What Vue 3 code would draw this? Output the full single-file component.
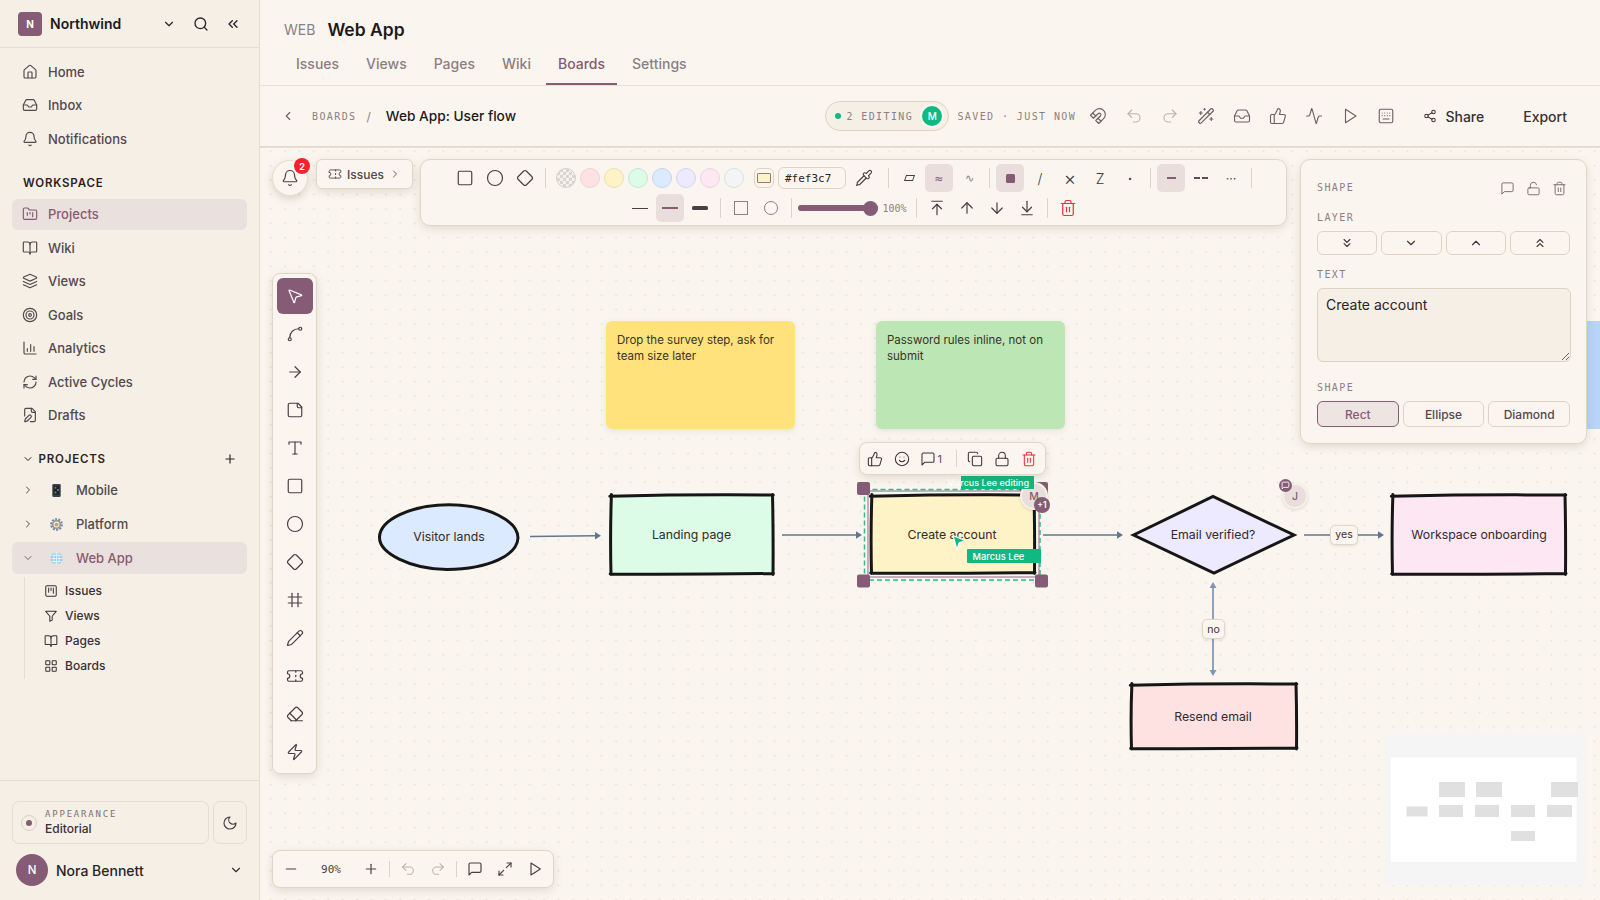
<script setup>
import { h } from 'vue'

const icons = {
  home: '<path d="M15 21v-8a1 1 0 0 0-1-1h-4a1 1 0 0 0-1 1v8"/><path d="M3 10a2 2 0 0 1 .709-1.528l7-5.999a2 2 0 0 1 2.582 0l7 5.999A2 2 0 0 1 21 10v9a2 2 0 0 1-2 2H5a2 2 0 0 1-2-2z"/>',
  inbox: '<polyline points="22 12 16 12 14 15 10 15 8 12 2 12"/><path d="M5.45 5.11 2 12v6a2 2 0 0 0 2 2h16a2 2 0 0 0 2-2v-6l-3.45-6.89A2 2 0 0 0 16.76 4H7.24a2 2 0 0 0-1.79 1.11z"/>',
  bell: '<path d="M10.268 21a2 2 0 0 0 3.464 0"/><path d="M3.262 15.326A1 1 0 0 0 4 17h16a1 1 0 0 0 .74-1.673C19.41 13.956 18 12.499 18 8A6 6 0 0 0 6 8c0 4.499-1.411 5.956-2.738 7.326"/>',
  folder: '<path d="M4 20h16a2 2 0 0 0 2-2V8a2 2 0 0 0-2-2h-7.93a2 2 0 0 1-1.66-.9l-.82-1.2A2 2 0 0 0 7.93 3H4a2 2 0 0 0-2 2v13c0 1.1.9 2 2 2Z"/><path d="M8 10v4"/><path d="M12 10v2"/><path d="M16 10v6"/>',
  book: '<path d="M12 7v14"/><path d="M3 18a1 1 0 0 1-1-1V4a1 1 0 0 1 1-1h5a4 4 0 0 1 4 4 4 4 0 0 1 4-4h5a1 1 0 0 1 1 1v13a1 1 0 0 1-1 1h-6a3 3 0 0 0-3 3 3 3 0 0 0-3-3z"/>',
  layers: '<path d="m12.83 2.18a2 2 0 0 0-1.66 0L2.6 6.08a1 1 0 0 0 0 1.83l8.58 3.91a2 2 0 0 0 1.66 0l8.58-3.9a1 1 0 0 0 0-1.83Z"/><path d="m22 17.65-9.17 4.16a2 2 0 0 1-1.66 0L2 17.65"/><path d="m22 12.65-9.17 4.16a2 2 0 0 1-1.66 0L2 12.65"/>',
  goal: '<circle cx="12" cy="12" r="10"/><circle cx="12" cy="12" r="6"/><circle cx="12" cy="12" r="2"/>',
  chart: '<path d="M3 3v16a2 2 0 0 0 2 2h16"/><path d="M8 17v-4"/><path d="M13 17V7"/><path d="M18 17v-7"/>',
  cycle: '<path d="M3 12a9 9 0 0 1 9-9 9.75 9.75 0 0 1 6.74 2.74L21 8"/><path d="M21 3v5h-5"/><path d="M21 12a9 9 0 0 1-9 9 9.75 9.75 0 0 1-6.74-2.74L3 16"/><path d="M8 16H3v5"/>',
  draft: '<path d="M12.5 22H18a2 2 0 0 0 2-2V7l-5-5H6a2 2 0 0 0-2 2v9.5"/><path d="M14 2v4a2 2 0 0 0 2 2h4"/><path d="M13.378 15.626a1 1 0 1 0-3.004-3.004l-5.01 5.012a2 2 0 0 0-.506.854l-.837 2.87a.5.5 0 0 0 .62.62l2.87-.837a2 2 0 0 0 .854-.506z"/>',
  kanban: '<rect x="3" y="3" width="18" height="18" rx="2"/><path d="M8 7v7"/><path d="M12 7v4"/><path d="M16 7v9"/>',
  funnel: '<path d="M3 4h18l-7 8.5V19l-4 2v-8.5z"/>',
  grid: '<rect x="3" y="3" width="7" height="7" rx="1"/><rect x="14" y="3" width="7" height="7" rx="1"/><rect x="14" y="14" width="7" height="7" rx="1"/><rect x="3" y="14" width="7" height="7" rx="1"/>',
  moon: '<path d="M12 3a6 6 0 0 0 9 9 9 9 0 1 1-9-9Z"/>',
  search: '<circle cx="11" cy="11" r="8"/><path d="m21 21-4.3-4.3"/>',
  dleft: '<path d="m11 17-5-5 5-5"/><path d="m18 17-5-5 5-5"/>',
  down: '<path d="m6 9 6 6 6-6"/>',
  up: '<path d="m18 15-6-6-6 6"/>',
  left: '<path d="m15 18-6-6 6-6"/>',
  right: '<path d="m9 18 6-6-6-6"/>',
  ddown: '<path d="m7 6 5 5 5-5"/><path d="m7 13 5 5 5-5"/>',
  dup: '<path d="m17 11-5-5-5 5"/><path d="m17 18-5-5-5 5"/>',
  plus: '<path d="M5 12h14"/><path d="M12 5v14"/>',
  minus: '<path d="M5 12h14"/>',
  magnet: '<path d="m6 15-4-4 6.75-6.77a7.79 7.79 0 0 1 11 11L13 22l-4-4 6.39-6.36a2.14 2.14 0 0 0-3-3L6 15"/><path d="m5 8 4 4"/><path d="m12 15 4 4"/>',
  undo: '<path d="M9 14 4 9l5-5"/><path d="M4 9h10.5a5.5 5.5 0 0 1 0 11H11"/>',
  redo: '<path d="m15 14 5-5-5-5"/><path d="M20 9H9.5a5.5 5.5 0 0 0 0 11H13"/>',
  wand: '<path d="m21.64 3.64-1.28-1.28a1.21 1.21 0 0 0-1.72 0L2.36 18.64a1.21 1.21 0 0 0 0 1.72l1.28 1.28a1.2 1.2 0 0 0 1.72 0L21.64 5.36a1.2 1.2 0 0 0 0-1.72"/><path d="m14 7 3 3"/><path d="M5 6v4"/><path d="M19 14v4"/><path d="M10 2v2"/><path d="M7 8H3"/><path d="M21 16h-4"/><path d="M11 3H9"/>',
  thumb: '<path d="M7 10v12"/><path d="M15 5.88 14 10h5.83a2 2 0 0 1 1.92 2.56l-2.33 8A2 2 0 0 1 17.5 22H4a2 2 0 0 1-2-2v-8a2 2 0 0 1 2-2h2.76a2 2 0 0 0 1.79-1.11L12 2a3.13 3.13 0 0 1 3 3.88Z"/>',
  activity: '<path d="M22 12h-2.48a2 2 0 0 0-1.93 1.46l-2.35 8.36a.25.25 0 0 1-.48 0L9.24 2.18a.25.25 0 0 0-.48 0l-2.35 8.36A2 2 0 0 1 4.49 12H2"/>',
  play: '<polygon points="6 3 20 12 6 21 6 3"/>',
  keys: '<rect x="3" y="3" width="18" height="18" rx="2"/><path d="M7 8h.01M10.3 8h.01M13.7 8h.01M17 8h.01M7 11.5h.01M10.3 11.5h.01M13.7 11.5h.01M17 11.5h.01"/><path d="M8 16h8"/>',
  share: '<circle cx="18" cy="5" r="3"/><circle cx="6" cy="12" r="3"/><circle cx="18" cy="19" r="3"/><line x1="8.59" x2="15.42" y1="13.51" y2="17.49"/><line x1="15.41" x2="8.59" y1="6.51" y2="10.49"/>',
  ticket: '<path d="M2 9a3 3 0 0 1 0 6v2a2 2 0 0 0 2 2h16a2 2 0 0 0 2-2v-2a3 3 0 0 1 0-6V7a2 2 0 0 0-2-2H4a2 2 0 0 0-2 2Z"/><path d="M13 5v2"/><path d="M13 17v2"/><path d="M13 11v2"/>',
  pipette: '<path d="m2 22 1-1h3l9-9"/><path d="M3 21v-3l9-9"/><path d="m15 6 3.4-3.4a2.1 2.1 0 1 1 3 3L18 9l.4.4a2.1 2.1 0 1 1-3 3l-3.8-3.8a2.1 2.1 0 1 1 3-3l.4.4Z"/>',
  sticky: '<path d="M16 3H5a2 2 0 0 0-2 2v14a2 2 0 0 0 2 2h14a2 2 0 0 0 2-2V8Z"/><path d="M15 3v4a2 2 0 0 0 2 2h4"/>',
  type: '<path d="M4 7V4h16v3"/><path d="M12 4v16"/><path d="M9 20h6"/>',
  frame: '<path d="M8 3v18"/><path d="M16 3v18"/><path d="M3 8h18"/><path d="M3 16h18"/>',
  pencil: '<path d="M21.174 6.812a1 1 0 0 0-3.986-3.987L3.842 16.174a2 2 0 0 0-.5.83l-1.321 4.352a.5.5 0 0 0 .623.622l4.353-1.32a2 2 0 0 0 .83-.497z"/><path d="m15 5 4 4"/>',
  eraser: '<path d="m7 21-4.3-4.3c-1-1-1-2.5 0-3.4l9.6-9.6c1-1 2.5-1 3.4 0l5.6 5.6c1 1 1 2.5 0 3.4L13 21"/><path d="M22 21H7"/><path d="m5 11 9 9"/>',
  bolt: '<path d="M4 14a1 1 0 0 1-.78-1.63l9.9-10.2a.5.5 0 0 1 .86.46l-1.92 6.02A1 1 0 0 0 13 10h7a1 1 0 0 1 .78 1.63l-9.9 10.2a.5.5 0 0 1-.86-.46l1.92-6.02A1 1 0 0 0 11 14z"/>',
  cursor: '<path d="M4.037 4.688a.495.495 0 0 1 .651-.651l16 6.5a.5.5 0 0 1-.063.947l-6.124 1.58a2 2 0 0 0-1.438 1.435l-1.579 6.126a.5.5 0 0 1-.947.063z"/>',
  curve: '<circle cx="5" cy="19" r="2"/><circle cx="19" cy="5" r="2"/><path d="M5 17C5 10 10 5 17 5"/>',
  arrow: '<path d="M5 12h14"/><path d="m12 5 7 7-7 7"/>',
  rect: '<rect x="3" y="3" width="18" height="18" rx="2"/>',
  circle: '<circle cx="12" cy="12" r="10"/>',
  diamond: '<path d="M2.7 10.3a2.41 2.41 0 0 0 0 3.41l7.59 7.59a2.41 2.41 0 0 0 3.41 0l7.59-7.59a2.41 2.41 0 0 0 0-3.41L13.7 2.71a2.41 2.41 0 0 0-3.41 0z"/>',
  msg: '<path d="M21 15a2 2 0 0 1-2 2H7l-4 4V5a2 2 0 0 1 2-2h14a2 2 0 0 1 2 2z"/>',
  lockopen: '<rect width="18" height="11" x="3" y="11" rx="2"/><path d="M7 11V7a5 5 0 0 1 9.9-1"/>',
  lock: '<rect width="18" height="11" x="3" y="11" rx="2"/><path d="M7 11V7a5 5 0 0 1 10 0v4"/>',
  trash: '<path d="M3 6h18"/><path d="M19 6v14c0 1-1 2-2 2H7c-1 0-2-1-2-2V6"/><path d="M8 6V4c0-1 1-2 2-2h4c1 0 2 1 2 2v2"/><line x1="10" x2="10" y1="11" y2="17"/><line x1="14" x2="14" y1="11" y2="17"/>',
  copy: '<rect width="14" height="14" x="8" y="8" rx="2"/><path d="M4 16c-1.1 0-2-.9-2-2V4c0-1.1.9-2 2-2h10c1.1 0 2 .9 2 2"/>',
  smile: '<circle cx="12" cy="12" r="10"/><path d="M8 14s1.5 2 4 2 4-2 4-2"/><line x1="9" x2="9.01" y1="9" y2="9"/><line x1="15" x2="15.01" y1="9" y2="9"/>',
  expand: '<path d="M15 3h6v6"/><path d="M9 21H3v-6"/><path d="M21 3l-7 7"/><path d="M3 21l7-7"/>',
  top: '<path d="M5 3h14"/><path d="m18 13-6-6-6 6"/><path d="M12 7v14"/>',
  aup: '<path d="m5 12 7-7 7 7"/><path d="M12 19V5"/>',
  adown: '<path d="M12 5v14"/><path d="m19 12-7 7-7-7"/>',
  bottom: '<path d="M12 17V3"/><path d="m6 11 6 6 6-6"/><path d="M19 21H5"/>'
}

const Ic = (props) => h('svg', {
  viewBox: '0 0 24 24',
  width: props.s || 16,
  height: props.s || 16,
  fill: 'none',
  stroke: 'currentColor',
  'stroke-width': props.w || 2,
  'stroke-linecap': 'round',
  'stroke-linejoin': 'round',
  innerHTML: icons[props.n]
})
Ic.props = ['n', 's', 'w']

const nav1 = [
  { i: 'home', t: 'Home' },
  { i: 'inbox', t: 'Inbox' },
  { i: 'bell', t: 'Notifications' }
]
const nav2 = [
  { i: 'folder', t: 'Projects', on: true },
  { i: 'book', t: 'Wiki' },
  { i: 'layers', t: 'Views' },
  { i: 'goal', t: 'Goals' },
  { i: 'chart', t: 'Analytics' },
  { i: 'cycle', t: 'Active Cycles' },
  { i: 'draft', t: 'Drafts' }
]
const subs = [
  { i: 'kanban', t: 'Issues' },
  { i: 'funnel', t: 'Views' },
  { i: 'book', t: 'Pages' },
  { i: 'grid', t: 'Boards' }
]
const tabs = ['Issues', 'Views', 'Pages', 'Wiki', 'Boards', 'Settings']
const headIcons = [
  { i: 'magnet' }, { i: 'undo', dim: true }, { i: 'redo', dim: true }, { i: 'wand' },
  { i: 'inbox' }, { i: 'thumb' }, { i: 'activity' }, { i: 'play' }, { i: 'keys' }
]
const swatches = [
  { c: '#fee2e2', b: '#f1cfcf' }, { c: '#fef3c7', b: '#eadfae' }, { c: '#dcfce7', b: '#c5e6d0' },
  { c: '#dbeafe', b: '#c3d5ec' }, { c: '#ede9fe', b: '#d8d3ee' }, { c: '#fce7f3', b: '#ecd3e2' }, { c: '#f3f4f6', b: '#dcdfe3' }
]
const tools = ['cursor', 'curve', 'arrow', 'sticky', 'type', 'rect', 'circle', 'diamond', 'frame', 'pencil', 'ticket', 'eraser', 'bolt']
const layerBtns = ['ddown', 'down', 'up', 'dup']
const shapeBtns = [{ t: 'Rect', on: true }, { t: 'Ellipse' }, { t: 'Diamond' }]
const mini = [
  [1439, 782, 26, 15], [1476, 782, 26, 15], [1551, 782, 27, 15], [1406.5, 806.5, 21, 10],
  [1439, 805, 24, 12], [1475, 805, 24, 12], [1511, 805, 24, 12], [1547, 805, 25, 12], [1511, 831, 24, 10]
]
function sk(a, b, c, d) {
  const mx = (a + c) / 2, my = (b + d) / 2
  return `M${a - 1.2} ${b + 0.8}Q${mx} ${b - 1.2} ${c + 0.8} ${b - 0.4}M${c} ${b - 1}Q${c + 0.9} ${my} ${c + 0.5} ${d + 1}M${c + 1} ${d}Q${mx} ${d + 1} ${a - 0.8} ${d + 0.6}M${a} ${d + 1}Q${a - 1} ${my} ${a + 0.4} ${b - 1}`
}
const rects = [
  { f: '#dcfce7', b: [611, 495.5, 772.5, 573.5], t: 'Landing page', x: 691.5, y: 534.5 },
  { f: '#fef3c7', b: [871.5, 495.5, 1034, 572.5], t: 'Create account', x: 952, y: 534.5 },
  { f: '#fce7f3', b: [1392.5, 495.5, 1565, 573.5], t: 'Workspace onboarding', x: 1479, y: 534.5 },
  { f: '#fee2e2', b: [1131.5, 684.5, 1296, 748], t: 'Resend email', x: 1213, y: 716.5 }
]
</script>

<template>
  <div class="app">
    <aside class="side">
      <div class="brand">
        <div class="logo">N</div>
        <div class="bname">Northwind</div>
        <button class="bbtn"><Ic n="down" :s="14" /></button>
        <button class="bbtn"><Ic n="search" :s="16" /></button>
        <button class="bbtn"><Ic n="dleft" :s="16" /></button>
      </div>
      <nav class="nav first">
        <a v-for="n in nav1" :key="n.t" class="item"><Ic :n="n.i" :s="16" :w="1.75" />{{ n.t }}</a>
      </nav>
      <div class="sect">WORKSPACE</div>
      <nav class="nav">
        <a v-for="n in nav2" :key="n.t" class="item" :class="{ on: n.on }"><Ic :n="n.i" :s="16" :w="1.75" />{{ n.t }}</a>
      </nav>
      <div class="phead">
        <span class="pchev"><Ic n="down" :s="12" /></span>
        <span class="ptitle">PROJECTS</span>
        <span class="pplus"><Ic n="plus" :s="14" /></span>
      </div>
      <div class="plist">
        <a class="prow">
          <span class="pchev2"><Ic n="right" :s="12" /></span>
          <svg class="emo" viewBox="0 0 16 16" width="15" height="15">
            <rect x="3.5" y="1" width="9" height="14" rx="1.5" fill="#3c4148" />
            <rect x="5" y="3" width="6" height="9.5" fill="#1d2328" />
            <circle cx="7" cy="5" r="1" fill="#d9524e" /><circle cx="9.5" cy="7.5" r="1" fill="#4aa3df" /><circle cx="7" cy="10" r="1" fill="#5cb85c" />
          </svg>
          Mobile
        </a>
        <a class="prow">
          <span class="pchev2"><Ic n="right" :s="12" /></span>
          <svg class="emo" viewBox="0 0 16 16" width="15" height="15">
            <circle cx="8" cy="8" r="5.5" fill="none" stroke="#7b8794" stroke-width="2.6" stroke-dasharray="2 1.4" />
            <circle cx="8" cy="8" r="4" fill="none" stroke="#8c98a4" stroke-width="1.8" />
            <circle cx="8" cy="8" r="2" fill="#c9a066" />
          </svg>
          Platform
        </a>
        <a class="prow on">
          <span class="pchev2"><Ic n="down" :s="12" /></span>
          <svg class="emo" viewBox="0 0 16 16" width="15" height="15">
            <circle cx="8" cy="8" r="6.5" fill="#8fd0ee" />
            <g fill="none" stroke="#e9f6fc" stroke-width=".9">
              <ellipse cx="8" cy="8" rx="3" ry="6.5" /><path d="M8 1.5v13M1.5 8h13M2.6 4.8h10.8M2.6 11.2h10.8" />
            </g>
          </svg>
          Web App
        </a>
      </div>
      <div class="subs">
        <a v-for="s in subs" :key="s.t" class="sub"><Ic :n="s.i" :s="14" :w="1.75" />{{ s.t }}</a>
      </div>
      <div class="foot">
        <div class="frow">
          <div class="appear">
            <span class="radio"><i></i></span>
            <div class="atext">
              <div class="alabel">APPEARANCE</div>
              <div class="aval">Editorial</div>
            </div>
          </div>
          <button class="moon"><Ic n="moon" :s="16" :w="1.75" /></button>
        </div>
        <div class="user">
          <div class="avatar">N</div>
          <div class="uname">Nora Bennett</div>
          <Ic n="down" :s="14" />
        </div>
      </div>
    </aside>

    <main class="main">
      <header class="head">
        <div class="titlebar"><span class="code">WEB</span><span class="title">Web App</span></div>
        <div class="tabs">
          <a v-for="t in tabs" :key="t" class="tab" :class="{ on: t === 'Boards' }">{{ t }}</a>
        </div>
      </header>

      <div class="crumbs">
        <span class="back"><Ic n="left" :s="14" /></span>
        <span class="cboard">BOARDS</span>
        <span class="cslash">/</span>
        <span class="ctitle">Web App: User flow</span>
        <div class="cright">
          <div class="pill"><i class="gdot"></i><span>2 EDITING</span><b class="mav">M</b></div>
          <span class="saved">SAVED · JUST NOW</span>
          <div class="hicons">
            <button v-for="(x, k) in headIcons" :key="k" class="hicon" :class="{ dim: x.dim }"><Ic :n="x.i" :s="18" :w="1.5" /></button>
          </div>
          <button class="hbtn share"><Ic n="share" :s="14" :w="1.75" />Share</button>
          <button class="hbtn export">Export</button>
        </div>
      </div>

      <section class="canvas">
        <div class="bluenote"></div>
        <div class="note yellow">Drop the survey step, ask for team size later</div>
        <div class="note green">Password rules inline, not on submit</div>

        <svg class="board" viewBox="260 147 1340 753" width="1340" height="753">
          <g class="wire">
            <path d="M530 536.4 595 535.8" /><path d="M782 535H856" /><path d="M1043 535H1117" />
            <path d="M1304 535H1378" />
          </g>
          <g class="head-a">
            <path d="M595 532l6 3.8-6 3.8z" /><path d="M856 531.2l6 3.8-6 3.8z" /><path d="M1117 531.2l6 3.8-6 3.8z" />
            <path d="M1378 531.2l6 3.8-6 3.8z" />
          </g>
          <path class="wire2" d="M1213 586V672" />
          <path class="head-b" d="M1209.5 588l3.5-6 3.5 6zM1209.5 670l3.5 6 3.5-6z" />

          <path class="shape" fill="#dbeafe" d="M379.5 537C380 520 410 505 449 504.8C490 505 518 522 518 538C517 555 490 569 447 569.5C410 569 379 553 379.5 537Z" />
          <text class="lbl" x="449" y="536.5">Visitor lands</text>

          <rect class="selband" x="868" y="491" width="171" height="86" />
          <template v-for="r in rects" :key="r.t">
            <rect :x="r.b[0]" :y="r.b[1]" :width="r.b[2] - r.b[0]" :height="r.b[3] - r.b[1]" :fill="r.f" />
            <path class="rough" :d="sk(r.b[0], r.b[1], r.b[2], r.b[3])" />
            <text class="lbl" :x="r.x" :y="r.y">{{ r.t }}</text>
          </template>
          <path class="shape" fill="#ede9fe" d="M1133.5 535L1213 496.5 1294 535 1214 573Z" />
          <text class="lbl" x="1213" y="534.5">Email verified?</text>

          <rect class="seldash" x="864.5" y="489.5" width="175.5" height="90.5" />
          <g class="handles">
            <rect x="857" y="482" width="13" height="13" rx="2" /><rect x="1035" y="482" width="13" height="13" rx="2" />
            <rect x="857" y="574.5" width="13" height="13" rx="2" /><rect x="1035" y="574.5" width="13" height="13" rx="2" />
          </g>
          <path class="gcursor" d="M953 535.5L965 540.5 959 543 957 550Z" />
        </svg>

        <div class="edge yes">yes</div>
        <div class="edge no">no</div>

        <div class="peek"></div>
        <div class="pres mm">M</div>
        <div class="mlabel top"><span>Marcus Lee editing</span></div>
        <div class="mlabel bottom">Marcus Lee</div>
        <div class="plus1">+1</div>
        <div class="pres jj">J</div>
        <div class="cbadge"><Ic n="msg" :s="9" :w="2.4" /></div>

        <div class="actions panel">
          <span class="ab"><Ic n="thumb" :s="16" :w="1.6" /></span>
          <span class="ab"><Ic n="smile" :s="16" :w="1.6" /></span>
          <span class="ab wide"><Ic n="msg" :s="16" :w="1.6" /><em>1</em></span>
          <i class="asep"></i>
          <span class="ab"><Ic n="copy" :s="16" :w="1.6" /></span>
          <span class="ab"><Ic n="lock" :s="16" :w="1.6" /></span>
          <span class="ab red"><Ic n="trash" :s="16" :w="1.6" /></span>
        </div>

        <button class="bellb"><Ic n="bell" :s="18" :w="1.6" /><b class="badge">2</b></button>
        <button class="issues panel"><Ic n="ticket" :s="14" :w="1.6" />Issues<Ic n="right" :s="12" :w="1.8" /></button>

        <div class="toolbar panel">
          <div class="tbrow r1">
            <span class="tb"><Ic n="rect" :s="18" :w="1.6" /></span>
            <span class="tb"><Ic n="circle" :s="18" :w="1.6" /></span>
            <span class="tb"><Ic n="diamond" :s="18" :w="1.6" /></span>
            <i class="sep"></i>
            <div class="swatches">
              <span class="sw checker"></span>
              <span v-for="s in swatches" :key="s.c" class="sw" :style="{ background: s.c, borderColor: s.b }"></span>
            </div>
            <span class="fillsw"><i></i></span>
            <span class="hex">#fef3c7</span>
            <span class="tb pip"><Ic n="pipette" :s="18" :w="1.5" /></span>
            <i class="sep"></i>
            <span class="tb"><i class="para"></i></span>
            <span class="tb on gl">≈</span>
            <span class="tb gl dimg">∿</span>
            <i class="sep"></i>
            <span class="tb on"><i class="sq"></i></span>
            <span class="tb gs">/</span>
            <span class="tb gs gx">×</span>
            <span class="tb gs">Z</span>
            <span class="tb gs gd">·</span>
            <i class="sep"></i>
            <span class="tb on"><i class="ln m"></i></span>
            <span class="tb"><i class="ln"></i><i class="ln sp"></i></span>
            <span class="tb dots">···</span>
            <i class="sep"></i>
          </div>
          <div class="tbrow">
            <span class="tb"><i class="stroke s1"></i></span>
            <span class="tb on"><i class="stroke s2"></i></span>
            <span class="tb"><i class="stroke s3"></i></span>
            <i class="sep"></i>
            <span class="tb"><i class="cornr"></i></span>
            <span class="tb"><i class="cornc"></i></span>
            <i class="sep"></i>
            <div class="slider"><i></i></div>
            <span class="pct">100%</span>
            <i class="sep"></i>
            <span class="tb"><Ic n="top" :s="18" :w="1.6" /></span>
            <span class="tb"><Ic n="aup" :s="18" :w="1.6" /></span>
            <span class="tb"><Ic n="adown" :s="18" :w="1.6" /></span>
            <span class="tb"><Ic n="bottom" :s="18" :w="1.6" /></span>
            <i class="sep"></i>
            <span class="tb red"><Ic n="trash" :s="18" :w="1.6" /></span>
          </div>
        </div>

        <div class="tools panel">
          <button v-for="(t, k) in tools" :key="t" class="tool" :class="{ on: k === 0 }"><Ic :n="t" :s="18" :w="1.6" /></button>
        </div>

        <div class="zoom panel">
          <span class="zb"><Ic n="minus" :s="16" :w="1.75" /></span>
          <span class="zv">90%</span>
          <span class="zb"><Ic n="plus" :s="16" :w="1.75" /></span>
          <i class="zsep"></i>
          <span class="zb dim"><Ic n="undo" :s="16" :w="1.6" /></span>
          <span class="zb dim"><Ic n="redo" :s="16" :w="1.6" /></span>
          <i class="zsep"></i>
          <span class="zb"><Ic n="msg" :s="16" :w="1.75" /></span>
          <span class="zb"><Ic n="expand" :s="16" :w="1.75" /></span>
          <span class="zb"><Ic n="play" :s="16" :w="1.75" /></span>
        </div>

        <div class="props panel">
          <div class="prow1">
            <span class="plabel">SHAPE</span>
            <div class="picons">
              <Ic n="msg" :s="15" :w="1.6" /><Ic n="lockopen" :s="15" :w="1.6" /><Ic n="trash" :s="15" :w="1.6" />
            </div>
          </div>
          <div class="plabel mt1">LAYER</div>
          <div class="pbtns lay">
            <button v-for="l in layerBtns" :key="l" class="lb"><Ic :n="l" :s="14" :w="2" /></button>
          </div>
          <div class="plabel mt2">TEXT</div>
          <textarea class="ta" spellcheck="false">Create account</textarea>
          <div class="plabel mt3">SHAPE</div>
          <div class="pbtns shp">
            <button v-for="s in shapeBtns" :key="s.t" class="sb" :class="{ on: s.on }">{{ s.t }}</button>
          </div>
        </div>

        <div class="minimap">
          <svg viewBox="1385 734 201 151" width="201" height="151">
            <rect x="1391" y="757.5" width="185.5" height="104.5" fill="#fff" />
            <rect v-for="(m, k) in mini" :key="k" :x="m[0]" :y="m[1]" :width="m[2]" :height="m[3]" fill="#e0e0e0" />
          </svg>
        </div>
      </section>
    </main>
  </div>
</template>

<style>
html, body { margin: 0; padding: 0; }
</style>

<style scoped>
.app {
  width: 1600px; height: 900px; display: flex; overflow: hidden;
  font-family: Inter, "Liberation Sans", sans-serif; color: #2b2327; background: #faf6ef;
}
button { font: inherit; color: inherit; background: none; border: 0; padding: 0; display: inline-flex; align-items: center; justify-content: center; }
svg { display: block; flex: none; }

.side { width: 260px; flex: none; box-sizing: border-box; border-right: 1px solid #e6ddd0; background: #f5efe6; display: flex; flex-direction: column; }
.brand { height: 48px; box-sizing: border-box; border-bottom: 1px solid #e6ddd0; display: flex; align-items: center; padding: 0 10px 0 18px; color: #2b2327; }
.logo { width: 24px; height: 24px; border-radius: 4px; background: #855b75; color: #fff; font-size: 10px; font-weight: 700; display: flex; align-items: center; justify-content: center; }
.bname { flex: 1; margin-left: 8px; font-size: 14px; font-weight: 600; color: #1f191c; }
.bbtn { width: 32px; height: 32px; }
.nav { display: flex; flex-direction: column; gap: 2px; padding: 0 12px; }
.nav.first { margin-top: 8px; }
.item { height: 31.5px; display: flex; align-items: center; gap: 10px; padding: 0 10px; border-radius: 6px; font-size: 13px; font-weight: 500; color: #54484e; }
.item.on { background: #eae0dd; color: #855b75; }
.sect { margin: 21.5px 0 8.5px 23px; height: 14px; line-height: 14px; font-size: 11.5px; font-weight: 600; letter-spacing: .07em; color: #2b2327; }
.phead { margin-top: 18px; height: 20px; display: flex; align-items: center; padding-left: 22px; color: #2b2327; }
.pchev { width: 12px; }
.ptitle { margin-left: 4.5px; font-size: 11.5px; font-weight: 600; letter-spacing: .07em; flex: 1; }
.pplus { margin-right: 22px; }
.plist { display: flex; flex-direction: column; gap: 2px; padding: 0 12px; margin-top: 5px; }
.prow { height: 32px; display: flex; align-items: center; padding-left: 10px; border-radius: 6px; font-size: 13px; font-weight: 500; color: #54484e; }
.prow.on { background: #eae0dd; color: #855b75; }
.pchev2 { width: 12px; }
.emo { margin: 0 12px 0 15px; }
.subs { margin: 3px 0 0 24px; padding: 1px 0 1px 19px; border-left: 1px solid #e6ddd0; display: flex; flex-direction: column; }
.sub { height: 25px; display: flex; align-items: center; gap: 7px; font-size: 12px; font-weight: 500; color: #3a3035; }
.foot { margin-top: auto; border-top: 1px solid #e6ddd0; padding: 20px 12px 14px; display: flex; flex-direction: column; gap: 10px; }
.frow { display: flex; gap: 4px; }
.appear { width: 197px; height: 43px; box-sizing: border-box; border: 1px solid #e6ddd0; border-radius: 7px; display: flex; align-items: center; padding-left: 8px; }
.radio { width: 16px; height: 16px; box-sizing: border-box; border: 1px solid #d9d0c3; border-radius: 50%; display: flex; align-items: center; justify-content: center; }
.radio i { width: 6px; height: 6px; border-radius: 50%; background: #855b75; }
.atext { margin-left: 8px; }
.alabel { font-family: "DejaVu Sans Mono", monospace; font-size: 9px; letter-spacing: .2em; color: #7d7176; line-height: 12px; }
.aval { font-size: 12px; font-weight: 500; color: #3a3035; line-height: 17px; }
.moon { width: 34px; height: 43px; box-sizing: border-box; border: 1px solid #e6ddd0; border-radius: 7px; color: #4a3f44; }
.user { height: 32px; display: flex; align-items: center; padding: 0 4px 0 4px; color: #3a3035; }
.avatar { width: 32px; height: 32px; border-radius: 50%; background: #855b75; color: #fff; font-size: 11.5px; display: flex; align-items: center; justify-content: center; font-weight: 500; }
.uname { flex: 1; margin-left: 8px; font-size: 14px; font-weight: 500; color: #2b2327; }

.main { flex: 1; min-width: 0; display: flex; flex-direction: column; }
.head { height: 86px; box-sizing: border-box; border-bottom: 1px solid #e9e0d3; padding-left: 24px; }
.titlebar { height: 47px; padding: 12px 0 0 0; box-sizing: border-box; display: flex; align-items: center; gap: 12px; }
.code { font-size: 14px; color: #8b7f84; }
.title { font-size: 17.5px; font-weight: 600; color: #1f191c; }
.tabs { display: flex; gap: 3px; height: 38px; }
.tab { padding: 0 12px; display: flex; align-items: center; font-size: 14px; font-weight: 500; color: #8b7f84; box-sizing: border-box; height: 38px; padding-bottom: 4px; border-bottom: 2px solid transparent; }
.tab.on { color: #855b75; border-bottom-color: #855b75; }

.crumbs { position: relative; z-index: 1; height: 61px; box-sizing: border-box; border-bottom: 1px solid #e3d9ca; box-shadow: 0 1px 0 #e9e0d3; display: flex; align-items: center; padding: 0 20px 0 21px; }
.back { width: 14px; color: #6e6267; margin-right: 17px; }
.cboard, .saved { font-family: "DejaVu Sans Mono", monospace; font-size: 10px; letter-spacing: .14em; color: #8b7f84; }
.cslash { margin-left: 10px; font-size: 12px; color: #8b7f84; }
.ctitle { margin-left: 15px; font-size: 13.7px; font-weight: 500; color: #1f191c; }
.cright { margin-left: auto; display: flex; align-items: center; }
.pill { width: 124px; height: 30px; box-sizing: border-box; border: 1px solid #ddd3c3; border-radius: 15px; background: #f5efe6; display: flex; align-items: center; padding-left: 9px; font-family: "DejaVu Sans Mono", monospace; font-size: 10px; letter-spacing: .14em; color: #8b7f84; }
.gdot { width: 6px; height: 6px; border-radius: 50%; background: #10b981; margin-right: 5px; }
.mav { margin-left: auto; margin-right: 6px; width: 20px; height: 20px; border-radius: 50%; background: #10b981; box-shadow: 0 0 0 2px #faf6ef; color: #fff; font: 500 10px Inter, sans-serif; letter-spacing: 0; display: flex; align-items: center; justify-content: center; }
.saved { margin-left: 8px; width: 118px; white-space: nowrap; }
.hicons { display: flex; gap: 4px; margin-left: 7px; }
.hicon { width: 32px; height: 32px; color: #6b5f65; }
.hicon.dim { color: #bdb4ad; }
.hbtn { height: 32px; font-size: 14px; font-weight: 500; color: #3a3035; }
.share { gap: 8px; margin-left: 21px; }
.export { margin-left: 39px; padding-right: 13px; }

.canvas {
  position: relative; flex: 1; overflow: hidden; background-color: #faf6ef;
  background-image: radial-gradient(circle, #ebe4d8 .9px, transparent 1.1px);
  background-size: 14.4px 14.4px; background-position: 3.5px -2.9px;
}
.panel { background: #faf6ef; border: 1px solid #e0d6c5; box-shadow: 0 3px 10px rgba(70, 50, 30, .14); box-sizing: border-box; }
.board { position: absolute; left: 0; top: 0; }
.wire path { stroke: #5f7690; stroke-width: 1.5; fill: none; }
.head-a { fill: #5f7690; }
.wire2 { stroke: #8ea2ba; stroke-width: 2; fill: none; }
.head-b { fill: #7f95b0; }
.shape { stroke: #161616; stroke-width: 3; stroke-linejoin: miter; }
.rough { fill: none; stroke: #161616; stroke-width: 3; stroke-linecap: round; }
.lbl { font-size: 12.3px; fill: #332a2e; text-anchor: middle; dominant-baseline: central; font-weight: 400; }
.selband { fill: none; stroke: #c7aebb; stroke-width: 2; }
.seldash { fill: none; stroke: #2dbd8b; stroke-width: 1.5; stroke-dasharray: 5 3; }
.handles { fill: #855b75; }
.gcursor { fill: #10b981; stroke: #fff; stroke-width: 1.2; stroke-linejoin: round; }

.bluenote { position: absolute; left: 1300px; top: 174px; width: 80px; height: 108px; background: #b7d4fb; }
.note { position: absolute; top: 174px; width: 189px; height: 108px; box-sizing: border-box; padding: 11px; border-radius: 6px; font-size: 11.5px; line-height: 16px; color: #3a3328; box-shadow: 0 2px 6px rgba(70, 50, 30, .1); }
.yellow { left: 346px; background: #ffe27c; }
.green { left: 616px; background: #bce6b3; }

.edge { position: absolute; box-sizing: border-box; background: #faf6ef; border: 1px solid #e0d6c5; border-radius: 5px; font-size: 10.5px; color: #3a3035; display: flex; align-items: center; justify-content: center; box-shadow: 0 1px 3px rgba(70, 50, 30, .12); }
.yes { left: 1070px; top: 377.5px; width: 28px; height: 20px; }
.no { left: 942px; top: 472px; width: 23px; height: 20px; }

.mlabel { position: absolute; background: #10b981; color: #fff; font-size: 9px; font-weight: 500; white-space: nowrap; display: flex; align-items: center; }
.mlabel.top { left: 701px; top: 329px; width: 73px; height: 13px; justify-content: flex-end; }
.mlabel.top span { padding-right: 5px; flex: none; }
.mlabel.bottom { left: 707px; top: 402px; width: 74px; height: 14px; padding-left: 5.5px; box-sizing: border-box; font-size: 9.3px; border-radius: 1px; }
.peek { position: absolute; left: 759px; top: 336px; width: 10px; height: 10px; border-radius: 50%; background: #855b75; }
.pres { position: absolute; box-sizing: border-box; border-radius: 50%; background: #e9dedc; color: #855b75; display: flex; align-items: center; justify-content: center; font-size: 10.5px; font-weight: 500; border: 2px solid #f5f0e8; box-shadow: 0 1px 3px rgba(70, 50, 30, .15); }
.mm { left: 760px; top: 335px; width: 28px; height: 28px; }
.jj { left: 1022px; top: 336px; width: 26px; height: 26px; }
.plus1 { position: absolute; left: 774px; top: 350px; width: 16px; height: 16px; border-radius: 50%; background: #855b75; color: #fff; font-size: 8.5px; font-weight: 600; display: flex; align-items: center; justify-content: center; }
.cbadge { position: absolute; left: 1018.5px; top: 331.5px; width: 13px; height: 13px; border-radius: 50%; background: #855b75; color: #fff; display: flex; align-items: center; justify-content: center; }

.actions { position: absolute; left: 599px; top: 295px; width: 187px; height: 33px; border-radius: 8px; display: flex; align-items: center; padding-left: 1.5px; color: #3f353a; }
.ab { width: 27px; display: flex; align-items: center; justify-content: center; flex: none; }
.ab.wide { width: 33px; box-sizing: border-box; padding-left: 4px; gap: 2px; justify-content: flex-start; }
.ab em { font-style: normal; font-size: 11px; color: #5a4f54; }
.asep { width: 1px; height: 17px; background: #ddd3c3; margin: 0 5px 0 7px; flex: none; }
.ab.red, .tb.red { color: #f0303c; }

.bellb { position: absolute; left: 12px; top: 13px; width: 36px; height: 36px; border-radius: 50%; background: #faf6ef; border: 1px solid #e6ddd0; box-sizing: border-box; box-shadow: 0 3px 8px rgba(70, 50, 30, .18); color: #4a3f44; }
.badge { position: absolute; right: -3px; top: -3px; width: 16px; height: 16px; border-radius: 50%; background: #f5222d; color: #fff; font-size: 9px; font-weight: 700; display: flex; align-items: center; justify-content: center; }
.issues { position: absolute; left: 56px; top: 12px; width: 97px; height: 30px; border-radius: 6px; font-size: 12px; font-weight: 500; color: #54484e; gap: 5px; }

.toolbar { position: absolute; left: 160px; top: 12px; width: 867px; height: 67px; border-radius: 10px; display: flex; flex-direction: column; align-items: center; padding-top: 4px; gap: 2px; }
.tbrow { display: flex; align-items: center; gap: 2px; height: 28px; color: #4a3f44; }
.tb { width: 28px; height: 28px; border-radius: 5px; display: flex; align-items: center; justify-content: center; position: relative; }
.tb.on { background: #e9dedc; color: #855b75; }
.sep { width: 1px; height: 20px; background: #ddd3c3; margin: 0 4px; }
.swatches { display: flex; gap: 4px; margin-left: 4px; }
.sw { width: 20px; height: 20px; box-sizing: border-box; border-radius: 50%; border: 1px solid #ddd; }
.checker { background: repeating-conic-gradient(#d9d6d2 0 25%, #f5f2ed 0 50%) 0 0 / 6px 6px; border-color: #d6cfc4; }
.fillsw { margin-left: 8px; width: 20px; height: 20px; box-sizing: border-box; border: 1px solid #ddd3c3; border-radius: 6px; display: flex; align-items: center; justify-content: center; }
.fillsw i { width: 14px; height: 10px; background: #fef3c7; border: 1px solid #8a7f70; box-sizing: border-box; border-radius: 1px; }
.hex { margin-left: 2px; width: 68px; height: 22px; box-sizing: border-box; border: 1px solid #ddd3c3; border-radius: 6px; font-family: "DejaVu Sans Mono", monospace; font-size: 11px; display: flex; align-items: center; padding-left: 6px; color: #2b2327; }
.pip { margin: 0 4px 0 2px; }
.para { width: 9px; height: 6px; border: 1px solid #4a3f44; transform: skewX(-20deg); box-sizing: border-box; }
.gl { font-family: "DejaVu Sans Mono", monospace; font-size: 13px; }
.dimg { color: #8b7f84; font-size: 11px; }
.sq { width: 9px; height: 9px; background: #855b75; border-radius: 1.5px; }
.gs { font-family: Inter, sans-serif; font-weight: 300; font-size: 14px; color: #3f353a; }
.gx { font-size: 19px; }
.gd { font-size: 15px; font-weight: 500; }
.ln { width: 6px; height: 1.5px; background: #5a4f54; }
.ln.m { width: 9px; background: #855b75; }
.ln.sp { margin-left: 2px; }
.dots { font-size: 12px; letter-spacing: 0; }
.stroke { width: 16px; background: #4a3f44; display: block; }
.s1 { height: 1px; }
.s2 { height: 2px; background: #855b75; }
.s3 { height: 4px; border-radius: 1.5px; }
.cornr { width: 14px; height: 14px; border: 1px solid #8a7f84; box-sizing: border-box; }
.cornc { width: 14px; height: 14px; border: 1px solid #8a7f84; border-radius: 50%; box-sizing: border-box; }
.slider { width: 80px; height: 6px; border-radius: 3px; background: #855b75; position: relative; }
.slider i { position: absolute; right: 0; top: -4.5px; width: 15px; height: 15px; border-radius: 50%; background: #855b75; }
.pct { width: 30px; text-align: center; font-family: "DejaVu Sans Mono", monospace; font-size: 10px; color: #8b7f84; }

.tools { position: absolute; left: 12px; top: 126px; width: 45px; height: 501px; border-radius: 8px; display: flex; flex-direction: column; align-items: center; padding-top: 4px; gap: 2px; }
.tool { width: 36px; height: 36px; border-radius: 6px; color: #4a3f44; flex: none; }
.tool.on { background: #855b75; color: #fff; }

.zoom { position: absolute; left: 12px; top: 703px; width: 282px; height: 38px; border-radius: 8px; display: flex; align-items: center; padding-left: 3px; color: #4a3f44; }
.zb { width: 30px; display: flex; justify-content: center; }
.zb.dim { color: #bdb4ad; }
.zv { width: 50px; text-align: center; font-family: "DejaVu Sans Mono", monospace; font-size: 11px; color: #4a3f44; }
.zsep { width: 1px; height: 16px; background: #ddd3c3; margin: 0 3px; }

.props { position: absolute; left: 1040px; top: 12px; width: 287px; height: 285px; border-radius: 10px; padding: 21px 16px 0; }
.prow1 { display: flex; align-items: center; justify-content: space-between; height: 14px; }
.picons { display: flex; gap: 11px; margin-right: 3px; color: #7d7176; }
.plabel { font-family: "DejaVu Sans Mono", monospace; font-size: 10px; letter-spacing: .14em; color: #8b7f84; height: 14px; line-height: 14px; }
.mt1 { margin-top: 16px; }
.mt2 { margin-top: 13px; }
.mt3 { margin-top: 18.5px; }
.pbtns { display: flex; gap: 4px; }
.lay { margin-top: 6px; }
.shp { margin-top: 6.5px; }
.lb { flex: 1; height: 24px; box-sizing: border-box; border: 1px solid #ddd3c3; border-radius: 6px; color: #3f353a; }
.ta { display: block; width: 253.5px; height: 74px; margin-top: 6px; box-sizing: border-box; border: 1px solid #ddd3c3; border-radius: 6px; background: #f5efe6; font: 14px/18px Inter, sans-serif; color: #2b2327; padding: 7px 8px; outline: none; }
.sb { flex: 1; height: 26px; box-sizing: border-box; border: 1px solid #ddd3c3; border-radius: 6px; font-size: 12px; font-weight: 500; color: #54484e; }
.sb.on { background: #eee5e3; border-color: #855b75; color: #855b75; }

.minimap { position: absolute; left: 1125px; top: 587px; width: 201px; height: 151px; background: #f5f5f5; }
</style>
